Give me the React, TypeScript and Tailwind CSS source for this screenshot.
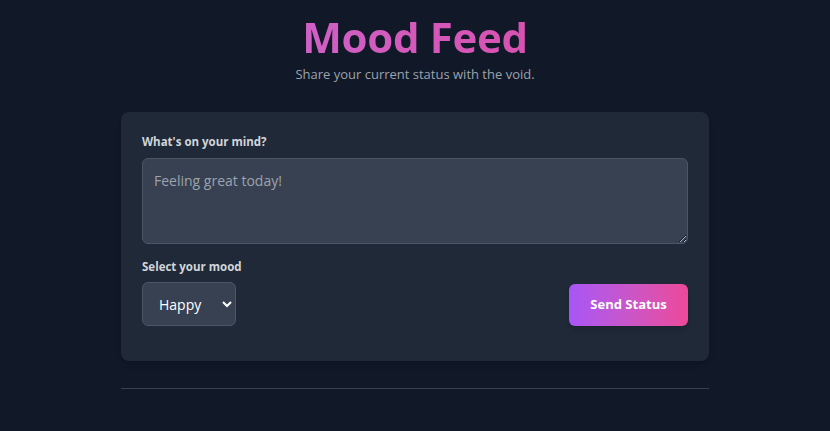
import { useState } from 'react';

const font = { fontFamily: '"Open Sans", "Noto Sans", sans-serif' };

export default function App() {
  const [text, setText] = useState('');
  const [mood, setMood] = useState('happy');

  return (
    <div className="min-h-screen bg-[#111827] text-gray-100" style={font}>
      <div className="mx-auto w-[588px] pt-[12px]">
        <header className="text-center">
          <h1 className="text-[42px] font-bold leading-[50px] tracking-[-0.3px] bg-gradient-to-r from-[#c96ad6] to-[#dc44a0] bg-clip-text text-transparent">
            Mood Feed
          </h1>
          <p className="mt-[2px] text-[13px] leading-5 text-[#9ca3af]">Share your current status with the void.</p>
        </header>

        <form
          className="mt-[28px] rounded-lg bg-[#1f2937] px-[21px] pt-[22px] pb-[35px] shadow-md"
          onSubmit={(e) => e.preventDefault()}
        >
          <label className="block text-[11.5px] font-bold leading-4 text-[#d1d5db]">What's on your mind?</label>
          <textarea
            value={text}
            onChange={(e) => setText(e.target.value)}
            placeholder="Feeling great today!"
            className="mt-[8px] block h-[86px] w-full resize-y rounded-md border border-[#4b5563] bg-[#374151] px-[11px] py-[10px] text-[14px] leading-6 text-white placeholder:text-[#9ca3af] outline-none"
          />

          <div className="mt-[15px] flex items-end justify-between">
            <div>
              <label className="block text-[11.5px] font-bold leading-4 text-[#d1d5db]">Select your mood</label>
              <select
                value={mood}
                onChange={(e) => setMood(e.target.value)}
                className="mt-[7px] block h-[44px] w-[94px] rounded-md border border-[#4b5563] bg-[#374151] pl-[12px] pr-2 text-[14px] text-white outline-none"
              >
                <option value="happy">Happy</option>
                <option value="sad">Sad</option>
                <option value="angry">Angry</option>
                <option value="chill">Chill</option>
              </select>
            </div>
            <button
              type="submit"
              className="h-[42px] w-[119px] rounded-md bg-gradient-to-r from-[#a855f7] to-[#ec4899] text-[13px] font-bold text-white shadow-md"
            >
              Send Status
            </button>
          </div>
        </form>

        <hr className="mt-[27px] border-t border-[#374151]" />
      </div>
    </div>
  );
}
